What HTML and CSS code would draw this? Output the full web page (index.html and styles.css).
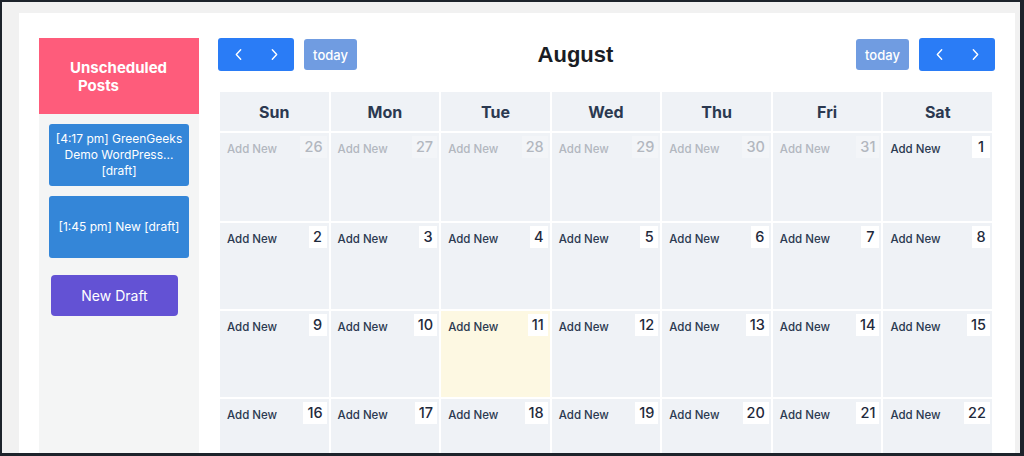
FILE: index.html
```html
<!DOCTYPE html>
<html lang="en">
<head>
    <meta charset="UTF-8">
    <title>Editorial Calendar</title>
    <link rel="stylesheet" href="styles.css">
</head>
<body>
    <div class="frame">
        <div class="panel">
            <div class="sidebar">
                <div class="sidebar-head">
                    <span>Unscheduled</span>
                    <span class="second">Posts</span>
                </div>
                <div class="post">[4:17 pm] GreenGeeks Demo WordPress... [draft]</div>
                <div class="post">[1:45 pm] New [draft]</div>
                <button class="new-draft">New Draft</button>
            </div>

            <div class="calendar">
                <div class="toolbar">
                    <div class="group">
                        <div class="nav">
                            <svg viewBox="0 0 8 14"><path d="M6.5 1.5 1.5 7l5 5.5"/></svg>
                            <svg viewBox="0 0 8 14"><path d="M1.5 1.5 6.5 7l-5 5.5"/></svg>
                        </div>
                        <button class="today">today</button>
                    </div>
                    <h2>August</h2>
                    <div class="group">
                        <button class="today">today</button>
                        <div class="nav">
                            <svg viewBox="0 0 8 14"><path d="M6.5 1.5 1.5 7l5 5.5"/></svg>
                            <svg viewBox="0 0 8 14"><path d="M1.5 1.5 6.5 7l-5 5.5"/></svg>
                        </div>
                    </div>
                </div>

                <div class="grid" id="grid">
                    <div class="head">Sun</div>
                    <div class="head">Mon</div>
                    <div class="head">Tue</div>
                    <div class="head">Wed</div>
                    <div class="head">Thu</div>
                    <div class="head">Fri</div>
                    <div class="head">Sat</div>
                </div>
            </div>
        </div>
    </div>

    <script>
        const grid = document.getElementById("grid");
        const days = [26, 27, 28, 29, 30, 31];
        for (let d = 1; d <= 22; d++) days.push(d);

        days.forEach((day, i) => {
            let cell = document.createElement("div");
            cell.classList.add("cell");
            if (i < 6) cell.classList.add("other");
            if (i >= 6 && day === 11) cell.classList.add("current");

            let add = document.createElement("span");
            add.classList.add("add");
            add.innerText = "Add New";

            let num = document.createElement("span");
            num.classList.add("num");
            num.innerText = day;

            cell.appendChild(add);
            cell.appendChild(num);
            grid.appendChild(cell);
        });
    </script>
</body>
</html>
```

FILE: styles.css
```css
* {
    margin: 0;
    padding: 0;
    box-sizing: border-box;
}
body {
    background: #1d232b;
    padding: 2px 4px 3px 2px;
    height: 456px;
    overflow: hidden;
    font-family: Inter, "Noto Sans", sans-serif;
}
.frame {
    background: #f1f1f1;
    height: 100%;
    padding: 11px 5px 0 17px;
}
.panel {
    background: white;
    height: 100%;
    display: flex;
    padding: 25px 0 0 20px;
    overflow: hidden;
}
.sidebar {
    width: 160px;
    background: #f4f5f5;
    display: flex;
    flex-direction: column;
}
.sidebar-head {
    background: #fe5c7b;
    height: 76px;
    color: white;
    font-weight: 700;
    font-size: 15px;
    line-height: 18px;
    display: flex;
    flex-direction: column;
    justify-content: center;
    padding: 2px 0 0 31px;
}
.sidebar-head .second {
    padding-left: 8px;
}
.post {
    margin: 10px 10px 0;
    background: #3486d8;
    color: white;
    border-radius: 3px;
    font-size: 12px;
    line-height: 16px;
    height: 62px;
    display: flex;
    align-items: center;
    justify-content: center;
    text-align: center;
    padding: 0 6px;
}
.new-draft {
    margin: 17px 0 0 12px;
    width: 127px;
    height: 41px;
    background: #6352d4;
    color: white;
    border: none;
    border-radius: 4px;
    font-family: inherit;
    font-size: 14px;
}
.calendar {
    width: 777px;
    margin-left: 19px;
    flex-shrink: 0;
}
.toolbar {
    height: 33px;
    display: flex;
    justify-content: space-between;
    align-items: center;
}
.group {
    display: flex;
    align-items: center;
    gap: 10px;
}
.nav {
    width: 76px;
    height: 33px;
    background: #2a7cf6;
    border-radius: 3px;
    display: flex;
    justify-content: space-between;
    align-items: center;
    padding: 0 16px 0 17px;
}
.nav svg {
    width: 7px;
    height: 13px;
    fill: none;
    stroke: white;
    stroke-width: 1.6;
    stroke-linecap: round;
    stroke-linejoin: round;
}
.today {
    width: 53px;
    height: 31px;
    background: #709ce1;
    color: white;
    border: none;
    border-radius: 3px;
    font-family: inherit;
    font-size: 13px;
    font-weight: 500;
}
h2 {
    font-family: "Liberation Sans", Arial, sans-serif;
    font-size: 22px;
    font-weight: 700;
    color: #1a1d24;
    margin-right: 62px;
}
.grid {
    margin: 21px 3px 0 2px;
    display: grid;
    grid-template-columns: repeat(7, 1fr);
    grid-template-rows: 39px 88px 86px 86px 86px;
    gap: 2px;
}
.head {
    background: #eff2f6;
    color: #2b3950;
    font-size: 16px;
    font-weight: 700;
    display: flex;
    align-items: center;
    justify-content: center;
}
.cell {
    background: #eff2f6;
    display: flex;
    justify-content: space-between;
    align-items: flex-start;
    padding: 3px 2px 0 7px;
}
.cell.current {
    background: #fdf8e2;
}
.add {
    font-size: 11.5px;
    font-weight: 500;
    color: #2b3950;
    margin-top: 6px;
}
.num {
    background: white;
    color: #1f2a3c;
    font-size: 14.5px;
    font-weight: 500;
    line-height: 22px;
    padding: 0 4px;
    min-width: 18px;
    text-align: center;
}
.other .add,
.other .num {
    color: #b2b7bf;
}
.other .num {
    background: #f3f5f8;
}
```
